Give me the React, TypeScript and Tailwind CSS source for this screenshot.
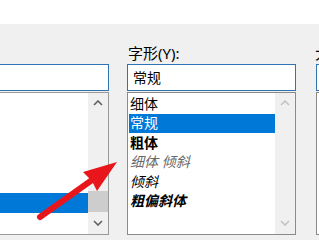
const ChevronUp = ({ color }: { color: string }) => (
    <svg width="10" height="6" viewBox="0 0 10 6">
        <polyline points="1,5 5,1 9,5" fill="none" stroke={color} strokeWidth="1.6" />
    </svg>
);

const ChevronDown = ({ color }: { color: string }) => (
    <svg width="10" height="6" viewBox="0 0 10 6">
        <polyline points="1,1 5,5 9,1" fill="none" stroke={color} strokeWidth="1.6" />
    </svg>
);

const styles = [
    { label: '细体', cls: 'text-black' },
    { label: '常规', cls: 'bg-[#0078d7] text-white' },
    { label: '粗体', cls: 'font-bold text-black' },
    { label: '细体 倾斜', cls: 'italic text-[#6a6a6a]' },
    { label: '倾斜', cls: 'italic text-black' },
    { label: '粗偏斜体', cls: 'italic font-bold text-black' },
];

const App = () => {
    return (
        <div
            className="relative w-[319px] h-[240px] overflow-hidden bg-[#f0f0f0] text-[14px] leading-none"
            style={{ fontFamily: '"Noto Sans", "Noto Sans CJK SC", sans-serif' }}
        >
            {/* top strip */}
            <div className="h-6 bg-white" />

            <div className="flex gap-[18px] ml-[-12px] pt-[20px]">
                {/* font column (cut off on the left) */}
                <div className="w-[121px] shrink-0 flex flex-col">
                    <div className="h-5" />
                    <div className="h-[27px] bg-white border border-[#2f73b4]" />
                    <div className="mt-[1px] h-[143px] bg-white border border-[#9a9a9a] flex">
                        <div className="flex-1 flex flex-col">
                            <div className="flex-1" />
                            <div className="h-5 bg-[#0078d7]" />
                            <div className="h-[21px]" />
                        </div>
                        <div className="w-5 bg-[#f0f0f0] flex flex-col">
                            <div className="h-5 flex items-center justify-center">
                                <ChevronUp color="#606060" />
                            </div>
                            <div className="flex-1" />
                            <div className="h-[21px] bg-[#cdcdcd]" />
                            <div className="h-[22px] flex items-center justify-center">
                                <ChevronDown color="#606060" />
                            </div>
                        </div>
                    </div>
                </div>

                {/* style column */}
                <div className="w-[169px] shrink-0 flex flex-col">
                    <div className="h-5 text-[15px] text-black whitespace-nowrap pl-[1px] pt-[2px]">字形(Y):</div>
                    <div className="h-[27px] bg-white border border-[#2f73b4] flex items-center px-[5px] text-black">
                        常规
                    </div>
                    <div className="mt-[1px] h-[143px] bg-white border border-[#8a8a8a] flex">
                        <div className="flex-1 flex flex-col pt-[1px] pl-[1px]">
                            {styles.map((s) => (
                                <div key={s.label} className={`h-[19.5px] flex items-center pl-[1px] whitespace-nowrap ${s.cls}`}>
                                    {s.label}
                                </div>
                            ))}
                        </div>
                        <div className="w-5 bg-[#f0f0f0] flex flex-col justify-between">
                            <div className="h-5 flex items-center justify-center">
                                <ChevronUp color="#c2c2c2" />
                            </div>
                            <div className="h-[22px] flex items-center justify-center">
                                <ChevronDown color="#c2c2c2" />
                            </div>
                        </div>
                    </div>
                </div>

                {/* size column (cut off on the right) */}
                <div className="w-[80px] shrink-0 flex flex-col">
                    <div className="h-5 text-[15px] text-black whitespace-nowrap pt-[2px] pl-[1px]">大小(S):</div>
                    <div className="h-[27px] bg-white border border-[#2f73b4] ml-[2px]" />
                    <div className="mt-[1px] h-[143px] bg-white border border-[#8a8a8a] ml-[2px]" />
                </div>
            </div>

            {/* red annotation arrow */}
            <svg className="absolute inset-0 pointer-events-none" width="319" height="240" viewBox="0 0 319 240">
                <line x1="40" y1="217" x2="92" y2="180" stroke="#e8161b" strokeWidth="6" strokeLinecap="round" />
                <polygon points="117,162 97,191 92,181 83,172" fill="#e8161b" />
            </svg>
        </div>
    );
};

export default App;
